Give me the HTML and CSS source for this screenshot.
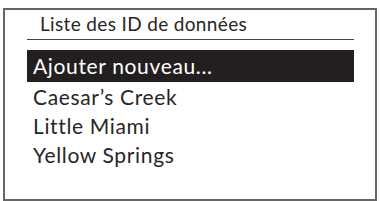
FILE: index.html
```html
<!DOCTYPE html>
<html lang="fr">
<head>
    <meta charset="UTF-8">
    <title>Liste des ID de données</title>
    <link rel="stylesheet" href="styles.css">
</head>
<body>
    <div class="panel">
        <h1 class="title">Liste des ID de données</h1>
        <ul class="idList">
            <li class="item selected">Ajouter nouveau...</li>
            <li class="item">Caesar’s Creek</li>
            <li class="item">Little Miami</li>
            <li class="item">Yellow Springs</li>
        </ul>
    </div>
</body>
</html>
```

FILE: styles.css
```css
* {
    box-sizing: border-box;
}
body {
    margin: 0;
    padding: 0;
    background-color: #fff;
    font-family: Lato, "Noto Sans", sans-serif;
    color: #262626;
}
.panel {
    margin: 8px 0 0 3px;
    width: 374px;
    height: 193px;
    border: 2px solid #666;
    padding: 0 21px 0 22px;
}
.title {
    margin: 0;
    padding: 3px 0 0 13px;
    height: 30px;
    font-size: 19px;
    font-weight: normal;
    letter-spacing: 0.35px;
    line-height: 22px;
    border-bottom: 1.5px solid #444;
}
ul {
    list-style: none;
    margin: 0;
    padding: 0;
}
.idList {
    margin-top: 10px;
}
.item {
    height: 29px;
    padding-left: 6px;
    font-size: 21px;
    letter-spacing: 0.65px;
    line-height: 29px;
}
.selected {
    height: 32px;
    line-height: 32px;
    background-color: #231f20;
    color: #fff;
}
```
